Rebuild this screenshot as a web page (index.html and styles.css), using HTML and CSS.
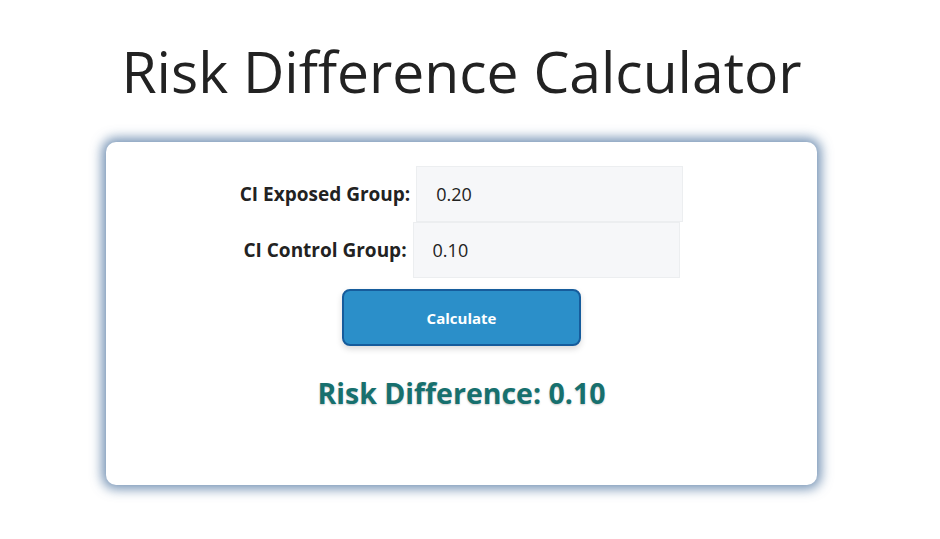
FILE: index.html
```html
<!DOCTYPE html>
<html lang="en">
<head>
    <meta charset="UTF-8" />
    <meta name="viewport" content="width=device-width, initial-scale=1.0" />
    <title>Risk Difference Calculator</title>
    <link rel="stylesheet" href="styles.css">
</head>
<body>
<div class="page">
    <h1>Risk Difference Calculator</h1>
    <div class="card">
        <div class="row">
            <label for="exposed">CI Exposed Group:</label>
            <input type="text" id="exposed" value="0.20">
        </div>
        <div class="row row-control">
            <label for="control">CI Control Group:</label>
            <input type="text" id="control" value="0.10">
        </div>
        <button class="calc-button">Calculate</button>
        <div class="result">Risk Difference: 0.10</div>
    </div>
</div>
</body>
</html>
```

FILE: styles.css
```css
body {
  margin: 0;
  background: #fff;
  font-family: "Open Sans", "Noto Sans", sans-serif;
  color: #222;
}
.page {
  width: 923px;
  display: flex;
  flex-direction: column;
  align-items: center;
  padding: 31px 0 50px;
}
h1 {
  font-size: 57px;
  font-weight: 400;
  margin: 0 0 31px;
  line-height: 80px;
  color: #222;
}
.card {
  width: 711px;
  height: 343px;
  box-sizing: border-box;
  background: #fff;
  border-radius: 10px;
  box-shadow: 0 0 12px 4px rgba(70, 110, 155, 0.75);
  display: flex;
  flex-direction: column;
  align-items: center;
  padding-top: 24px;
}
.row {
  display: flex;
  align-items: center;
  gap: 6px;
}
label {
  font-size: 19px;
  font-weight: 700;
  color: #222;
}
input {
  width: 267px;
  height: 56px;
  box-sizing: border-box;
  border: 1px solid #eceef0;
  background: #f6f7f9;
  padding: 0 19px;
  font-family: inherit;
  font-size: 18px;
  color: #222;
}
.calc-button {
  margin-top: 11px;
  width: 239px;
  height: 57px;
  background: #2b8fc9;
  border: 2px solid #165c9c;
  border-radius: 8px;
  color: #fff;
  font-family: inherit;
  font-size: 15px;
  font-weight: 700;
  box-shadow: 0 3px 6px rgba(0, 0, 0, 0.15);
}
.result {
  margin-top: 28px;
  font-size: 28.5px;
  font-weight: 700;
  color: #17706e;
  text-shadow: 0 1px 2px rgba(0, 0, 0, 0.2);
}
```
